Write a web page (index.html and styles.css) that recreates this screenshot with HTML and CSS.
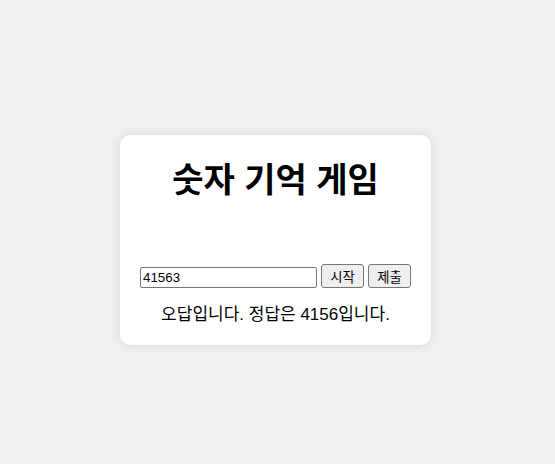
FILE: index.html
```html
<!DOCTYPE html>
<html lang="ko">
  <head>
    <meta charset="UTF-8" />
    <meta name="viewport" content="width=device-width, initial-scale=1.0" />
    <title>숫자 기억 게임</title>
    <link rel="stylesheet" href="styles.css">
  </head>
  <body>
    <div class="container">
      <h1>숫자 기억 게임</h1>
      <div class="numero" id="numero"></div>
      <div class="controles">
        <input type="text" id="resposta" value="41563" />
        <button id="iniciar">시작</button>
        <button id="enviar">제출</button>
      </div>
      <p class="mensagem" id="mensagem">오답입니다. 정답은 4156입니다.</p>
    </div>
  </body>
</html>
```

FILE: styles.css
```css
body {
  font-family: "Liberation Sans", "Noto Sans CJK KR", sans-serif;
  background-color: #f0f0f0;
  margin: 0;
  padding: 16px 4px 0 0;
  box-sizing: border-box;
  height: 100vh;
  display: flex;
  justify-content: center;
  align-items: center;
}

.container {
  background-color: #ffffff;
  padding: 18px 20px 20px;
  border-radius: 10px;
  box-shadow: 0 0 10px rgba(0, 0, 0, 0.1);
  text-align: center;
}

h1 {
  font-size: 34px;
  margin: 0;
}

.numero {
  height: 62px;
}

.controles {
  display: flex;
  gap: 4px;
  align-items: flex-end;
}

.controles input {
  width: 177px;
  font-family: "Liberation Sans", "Noto Sans CJK KR", sans-serif;
  font-size: 13.33px;
  padding: 1px 2px;
  border: 1px solid #767676;
  border-radius: 2px;
  height: 21px;
  box-sizing: border-box;
}

.controles button {
  font-family: "Liberation Sans", "Noto Sans CJK KR", sans-serif;
  font-size: 13.33px;
  width: 43px;
  padding: 0;
  border: 1px solid #767676;
  border-radius: 3px;
  background-color: #efefef;
  height: 24px;
}

.mensagem {
  font-size: 17px;
  margin: 12px 0 0;
}
```
